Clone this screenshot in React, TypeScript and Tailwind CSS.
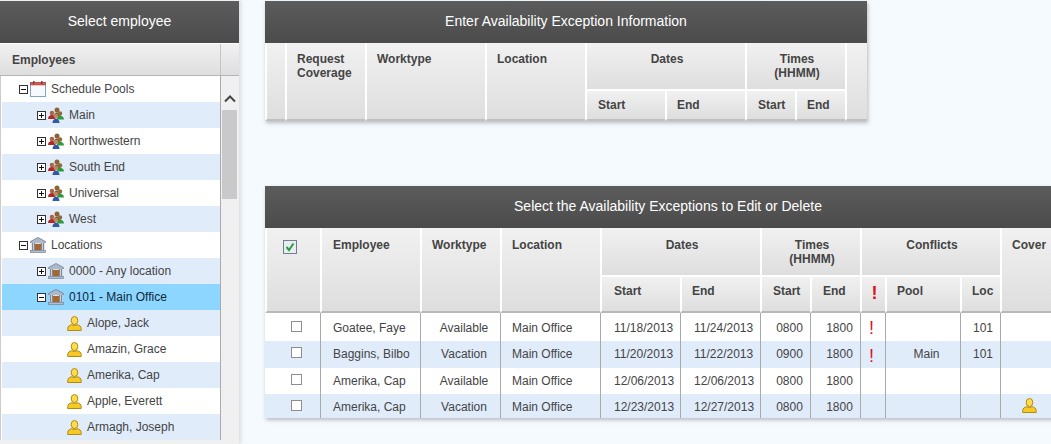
import { ReactNode } from "react";

const FONT = "font-['Liberation_Sans',Arial,sans-serif]";
const HEAD =
  "bg-gradient-to-b from-[#f1f1f1] to-[#dedede] border-l-2 border-white text-[12px] font-bold text-[#444] align-top leading-[14px] p-0";
const TOP = "pt-[9px]";
const SUB = "border-t-2 pt-[7px]";

function BoxToggle({ open }: { open: boolean }) {
  return (
    <svg width="9" height="9" viewBox="0 0 9 9" className="shrink-0">
      <rect x="0.5" y="0.5" width="8" height="8" fill="#fff" stroke="#333" />
      <path d="M2 4.500h5" stroke="#111" />
      {!open && <path d="M4.500 2v5" stroke="#111" />}
    </svg>
  );
}

function CalendarIcon() {
  return (
    <svg width="16" height="16" viewBox="0 0 16 16" className="shrink-0">
      <rect x="0.5" y="1.500" width="15" height="14" fill="#f6fafd" stroke="#7fa6c4" />
      <rect x="0.5" y="1.500" width="15" height="2.500" fill="#d8574e" stroke="#b5483f" strokeWidth="0.6" />
      <rect x="3" y="0" width="1.500" height="3" fill="#8a3a34" />
      <rect x="11" y="0" width="1.500" height="3" fill="#8a3a34" />
    </svg>
  );
}

function BankIcon() {
  return (
    <svg width="16" height="16" viewBox="0 0 16 16" className="shrink-0">
      <path d="M8 0.500 15.500 4.500v1H0.500v-1z" fill="#aeb9c8" stroke="#6f7f94" strokeWidth="0.8" />
      <rect x="1.500" y="5.500" width="13" height="8" fill="#dfe3e8" />
      <rect x="5" y="7" width="6" height="6.500" fill="#a8662a" />
      <path d="M2.500 6v7.500M4.500 6v7.500M11.500 6v7.500M13.500 6v7.500" stroke="#7d8a9c" strokeWidth="1.200" />
      <rect x="0.500" y="13.500" width="15" height="2" fill="#b4bfcd" stroke="#73849a" strokeWidth="0.7" />
    </svg>
  );
}

function PeopleIcon() {
  return (
    <svg width="16" height="16" viewBox="0 0 16 16" className="shrink-0">
      <circle cx="9" cy="3" r="2.500" fill="#8d6236" />
      <path d="M5.500 10c0-3 1.500-4.500 3.500-4.500s3.500 1.500 3.500 4.500z" fill="#7a5a35" />
      <circle cx="4" cy="6" r="2.300" fill="#a8664a" />
      <path d="M0 12c0-2.700 1.600-4 4-4s3.500 1.300 3.500 4z" fill="#b3272a" />
      <circle cx="12" cy="6.500" r="2.200" fill="#8f6a3e" />
      <path d="M9 12.500c0-2.500 1.200-3.700 3-3.700s4 1.200 4 3.700z" fill="#2f9a3c" />
      <circle cx="8" cy="9" r="2.300" fill="#b98a5e" />
      <path d="M4.500 16c0-2.700 1.300-4.300 3.500-4.300s3.500 1.600 3.500 4.300z" fill="#2e5aa8" />
    </svg>
  );
}

function UserIcon() {
  return (
    <svg width="15" height="15" viewBox="0 0 15 15" className="shrink-0 block">
      <ellipse cx="7.500" cy="4.500" rx="3.300" ry="4" fill="#ffdc4a" stroke="#b18a10" />
      <path d="M0.700 14.500v-2c0-2 2-3.500 4-3.800 1.500 1 4 1 5.500 0 2 .3 4 1.800 4 3.800v2z" fill="#f7c925" stroke="#b18a10" />
    </svg>
  );
}

type TreeRowProps = { indent: string; tint?: boolean; selected?: boolean; toggle?: ReactNode; icon: ReactNode; label: string };

function TreeRow({ indent, tint, selected, toggle, icon, label }: TreeRowProps) {
  return (
    <div
      className={`flex items-center h-[26px] ${indent} ${
        selected ? "bg-[#8cd6ff] text-[#10263a]" : tint ? "bg-[#e1ecfb] text-[#444]" : "bg-white text-[#444]"
      }`}
    >
      {toggle && <span className="mr-[2px] flex">{toggle}</span>}
      {icon}
      <span className="ml-[5px] text-[12px] whitespace-nowrap">{label}</span>
    </div>
  );
}

function TitleBar({ children }: { children: ReactNode }) {
  return (
    <div className="h-[42px] pb-[2px] flex items-center justify-center bg-gradient-to-b from-[#5c5c5c] to-[#4b4b4b] text-white text-[14px]">
      {children}
    </div>
  );
}

const pools = ["Main", "Northwestern", "South End", "Universal", "West"];
const staff = ["Alope, Jack", "Amazin, Grace", "Amerika, Cap", "Apple, Everett", "Armagh, Joseph"];

function EmployeePanel() {
  return (
    <div className="w-[239px] h-[444px] shrink-0 bg-[#f0f0f0] shadow-[2px_0_4px_rgba(0,0,0,0.12)] pt-px overflow-hidden">
      <TitleBar>Select employee</TitleBar>
      <div className="flex h-[33px] border-t border-white border-b border-b-[#b5b5b5] bg-gradient-to-b from-[#f1f1f1] to-[#dedede]">
        <div className="w-[221px] pl-[12px] flex items-center text-[12px] font-bold text-[#444] border-r border-[#c4c4c4]">
          Employees
        </div>
      </div>
      <div className="flex">
        <div className="w-[221px] pl-px bg-white border-r border-[#aaa] border-l border-l-[#ccc]">
          <TreeRow indent="pl-[17px]" toggle={<BoxToggle open />} icon={<CalendarIcon />} label="Schedule Pools" />
          {pools.map((p, i) => (
            <TreeRow key={p} indent="pl-[35px]" tint={i % 2 == 0} toggle={<BoxToggle open={false} />} icon={<PeopleIcon />} label={p} />
          ))}
          <TreeRow indent="pl-[17px]" toggle={<BoxToggle open />} icon={<BankIcon />} label="Locations" />
          <TreeRow indent="pl-[35px]" tint toggle={<BoxToggle open={false} />} icon={<BankIcon />} label="0000 - Any location" />
          <TreeRow indent="pl-[35px]" selected toggle={<BoxToggle open />} icon={<BankIcon />} label="0101 - Main Office" />
          {staff.map((s, i) => (
            <TreeRow key={s} indent="pl-[65px]" tint={i % 2 == 0} icon={<UserIcon />} label={s} />
          ))}
        </div>
        <div className="flex-1 flex flex-col items-center pl-px pr-[2px]">
          <svg width="12" height="8" viewBox="0 0 12 8" className="mt-[19px]">
            <path d="M1 6.500 6 1.500l5 5" fill="none" stroke="#444" strokeWidth="2" />
          </svg>
          <div className="w-full h-[89px] mt-[7px] bg-[#c9c9c9]" />
        </div>
      </div>
    </div>
  );
}

function EntryPanel() {
  return (
    <div className="w-[602px] mt-px shadow-[1px_2px_4px_rgba(0,0,0,0.25)]">
      <TitleBar>Enter Availability Exception Information</TitleBar>
      <table className="w-full table-fixed border-separate border-spacing-0">
        <colgroup>
          {[20, 80, 120, 100, 80, 80, 50, 50, 22].map((w, i) => (
            <col key={i} style={{ width: w }} />
          ))}
        </colgroup>
        <thead>
          <tr className="h-[46px]">
            <th rowSpan={2} className={`${HEAD} ${TOP} border-l-0 border-b-2 border-b-[#c0c0c0]`} />
            <th rowSpan={2} className={`${HEAD} ${TOP} border-b-2 border-b-[#c0c0c0] text-left pl-[10px]`}>
              Request
              <br />
              Coverage
            </th>
            <th rowSpan={2} className={`${HEAD} ${TOP} border-b-2 border-b-[#c0c0c0] text-left pl-[10px]`}>Worktype</th>
            <th rowSpan={2} className={`${HEAD} ${TOP} border-b-2 border-b-[#c0c0c0] text-left pl-[10px]`}>Location</th>
            <th colSpan={2} className={`${HEAD} ${TOP} pl-[2px] text-center`}>Dates</th>
            <th colSpan={2} className={`${HEAD} ${TOP} pl-[2px] text-center`}>
              Times
              <br />
              (HHMM)
            </th>
            <th rowSpan={2} className={`${HEAD} ${TOP} border-b-2 border-b-[#c0c0c0]`} />
          </tr>
          <tr className="h-[32px]">
            <th className={`${HEAD} ${SUB} border-b-2 border-b-[#c0c0c0] text-left pl-[11px]`}>Start</th>
            <th className={`${HEAD} ${SUB} border-b-2 border-b-[#c0c0c0] text-left pl-[10px]`}>End</th>
            <th className={`${HEAD} ${SUB} border-b-2 border-b-[#c0c0c0] text-left pl-[11px]`}>Start</th>
            <th className={`${HEAD} ${SUB} border-b-2 border-b-[#c0c0c0] text-left pl-[10px]`}>End</th>
          </tr>
        </thead>
      </table>
    </div>
  );
}

type Row = { name: string; type: string; start: string; end: string; from: string; flag?: boolean; pool?: string; loc?: string; cover?: boolean };

const rows: Row[] = [
  { name: "Goatee, Faye", type: "Available", start: "11/18/2013", end: "11/24/2013", from: "0800", flag: true, loc: "101" },
  { name: "Baggins, Bilbo", type: "Vacation", start: "11/20/2013", end: "11/22/2013", from: "0900", flag: true, pool: "Main", loc: "101" },
  { name: "Amerika, Cap", type: "Available", start: "12/06/2013", end: "12/06/2013", from: "0800" },
  { name: "Amerika, Cap", type: "Vacation", start: "12/23/2013", end: "12/27/2013", from: "0800", cover: true },
];

const rowHeights = ["h-[28px]", "h-[27px]", "h-[26px]", "h-[24px]"];
const rowNudge = ["pt-[2px]", "pb-[2px]", "pb-[1px]", "pt-[1px]"];
const boxNudge = ["mb-[2px]", "mb-[4px]", "mb-[4px]", "mb-[2px]"];
const CELL = "border-l border-[#a9a9a9] text-[12px] text-[#444] font-normal";
const BOTTOM = "border-b-2 border-b-[#b9b9b9]";

function ExceptionPanel() {
  return (
    <div className="w-[806px] mt-[65px] shadow-[1px_2px_4px_rgba(0,0,0,0.25)]">
      <TitleBar>Select the Availability Exceptions to Edit or Delete</TitleBar>
      <table className="w-[806px] table-fixed border-separate border-spacing-0">
        <colgroup>
          {[55, 100, 80, 100, 80, 80, 50, 50, 25, 75, 40, 71].map((w, i) => (
            <col key={i} style={{ width: w }} />
          ))}
        </colgroup>
        <thead>
          <tr className="h-[47px]">
            <th rowSpan={2} className={`${HEAD} pt-[10px] ${BOTTOM} border-l-0 text-left pl-[16px]`}>
              <svg width="14" height="14" viewBox="0 0 14 14" className="block mt-[2px]">
                <rect x="0.5" y="0.5" width="13" height="13" fill="#e6eef4" stroke="#6f7f8c" />
                <path d="M3.500 7l2.500 3 4.500-6.500" fill="none" stroke="#2f9a3c" strokeWidth="2" />
              </svg>
            </th>
            <th rowSpan={2} className={`${HEAD} pt-[10px] ${BOTTOM} text-left pl-[11px]`}>Employee</th>
            <th rowSpan={2} className={`${HEAD} pt-[10px] ${BOTTOM} text-left pl-[10px]`}>Worktype</th>
            <th rowSpan={2} className={`${HEAD} pt-[10px] ${BOTTOM} text-left pl-[10px]`}>Location</th>
            <th colSpan={2} className={`${HEAD} pt-[10px] pl-[2px] text-center`}>Dates</th>
            <th colSpan={2} className={`${HEAD} pt-[10px] pl-[2px] text-center`}>
              Times
              <br />
              (HHMM)
            </th>
            <th colSpan={3} className={`${HEAD} pt-[10px] pl-[2px] text-center`}>Conflicts</th>
            <th rowSpan={2} className={`${HEAD} pt-[10px] ${BOTTOM} text-left pl-[10px]`}>Cover</th>
          </tr>
          <tr className="h-[38px]">
            <th className={`${HEAD} border-t-2 pt-[7px] ${BOTTOM} text-left pl-[12px]`}>Start</th>
            <th className={`${HEAD} border-t-2 pt-[7px] ${BOTTOM} text-left pl-[10px]`}>End</th>
            <th className={`${HEAD} border-t-2 pt-[7px] ${BOTTOM} text-left pl-[11px]`}>Start</th>
            <th className={`${HEAD} border-t-2 pt-[7px] ${BOTTOM} text-left pl-[11px]`}>End</th>
            <th className={`${HEAD} border-t-2 pt-[9px] pl-[2px] ${BOTTOM} text-center text-[#e01020] !text-[18px]`}>!</th>
            <th className={`${HEAD} border-t-2 pt-[7px] ${BOTTOM} text-left pl-[10px]`}>Pool</th>
            <th className={`${HEAD} border-t-2 pt-[7px] ${BOTTOM} text-left pl-[10px]`}>Loc</th>
          </tr>
        </thead>
        <tbody>
          {rows.map((r, i) => (
            <tr key={i} className={`${rowHeights[i]} ${i % 2 == 1 ? "bg-[#e1ecfb]" : "bg-white"}`}>
              <td className={`${CELL} p-0 border-l-0 pl-[26px]`}>
                <span className={`block w-[11px] h-[11px] ${boxNudge[i]} border border-[#8e8e8e] bg-white`} />
              </td>
              <td className={`${CELL} ${rowNudge[i]} pl-[12px]`}>{r.name}</td>
              <td className={`${CELL} ${rowNudge[i]} pl-[7px] text-center`}>{r.type}</td>
              <td className={`${CELL} ${rowNudge[i]} pl-[11px]`}>Main Office</td>
              <td className={`${CELL} ${rowNudge[i]} pl-[13px]`}>{r.start}</td>
              <td className={`${CELL} ${rowNudge[i]} pl-[13px]`}>{r.end}</td>
              <td className={`${CELL} ${rowNudge[i]} pl-[8px] text-center`}>{r.from}</td>
              <td className={`${CELL} ${rowNudge[i]} pl-[8px] text-center`}>1800</td>
              <td className={`${CELL} pt-[2px] pl-[8px] text-[18px] font-bold !text-[#e01020] leading-[14px]`}>{r.flag && "!"}</td>
              <td className={`${CELL} ${rowNudge[i]} pl-[7px] text-center`}>{r.pool}</td>
              <td className={`${CELL} ${rowNudge[i]} pr-[7px] text-right`}>{r.loc}</td>
              <td className={`${CELL} pb-[2px] pl-[21px]`}>{r.cover && <UserIcon />}</td>
            </tr>
          ))}
        </tbody>
      </table>
    </div>
  );
}

export default function App() {
  return (
    <div className={`${FONT} w-[1051px] h-[444px] overflow-hidden flex bg-[#f5faff]`}>
      <EmployeePanel />
      <div className="ml-[26px] w-[806px] shrink-0">
        <EntryPanel />
        <ExceptionPanel />
      </div>
    </div>
  );
}
